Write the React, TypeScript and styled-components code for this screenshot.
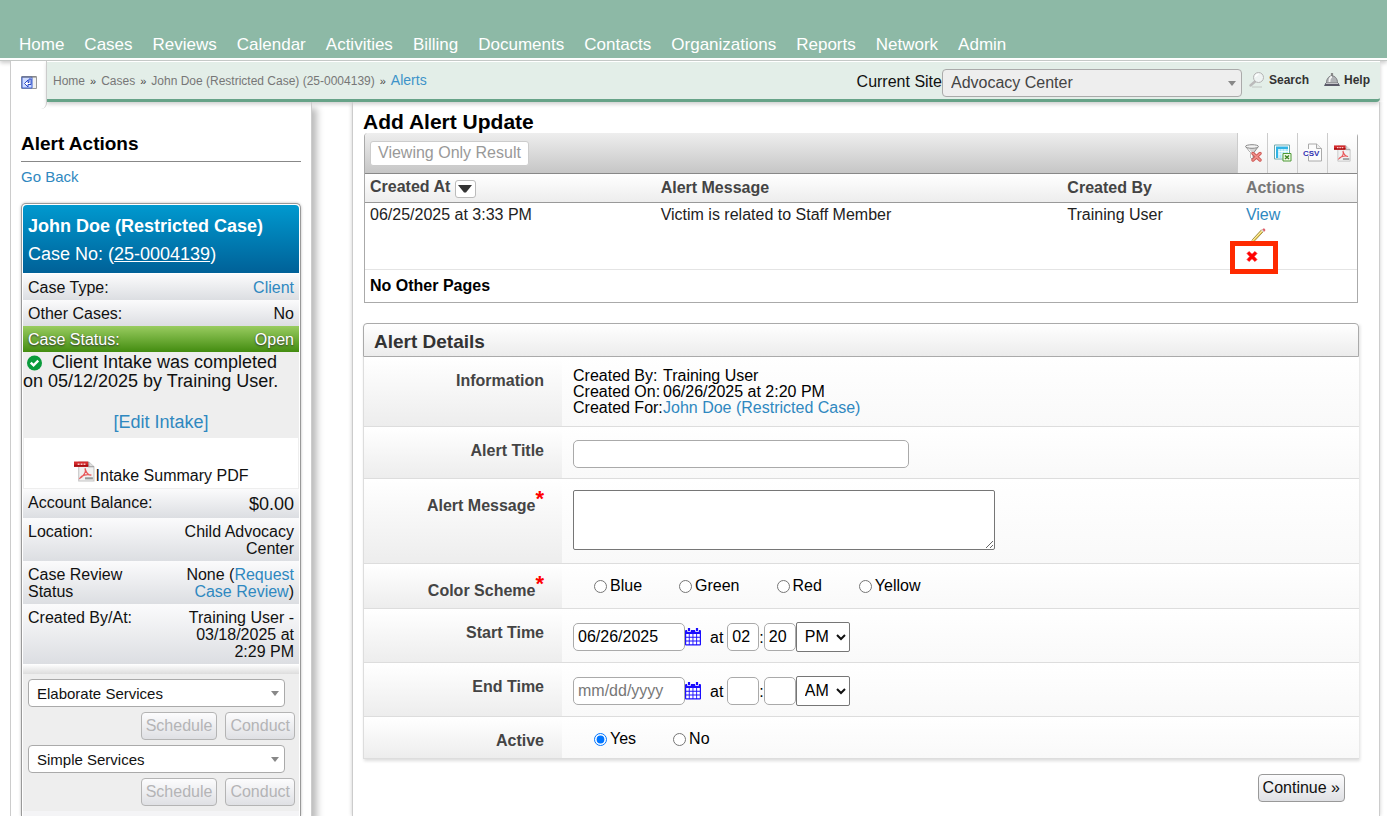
import React from "react";
import styled, { createGlobalStyle } from "styled-components";

const Global = createGlobalStyle`
  *, *::before, *::after { box-sizing: border-box; }
  body {
    margin: 0;
    background: #fff;
    color: #111;
    font: 16px/17px "Liberation Sans", Arial, sans-serif;
  }
  button, input, select, textarea { font: inherit; color: inherit; margin: 0; }
  h1, h2, h3, p, ul, ol, dl, dd { margin: 0; padding: 0; }
  ul, ol { list-style: none; }
  a { color: #2f88c0; text-decoration: none; }
`;

const Page = styled.div`
  min-height: 100vh;
  display: flex;
  flex-direction: column;
`;

const Header = styled.header`
  background: #8db9a6;
  padding: 35px 19px 3px;
  border-bottom: 2px solid #fff;
  box-shadow: 0 1px 0 #c4c8c6, 0 3px 4px #ccc;
`;

const NavList = styled.ul`
  display: flex;
  flex-wrap: wrap;
  gap: 0 20px;
`;

const NavLink = styled.a`
  color: #fff;
  font-size: 17px;
  line-height: 20px;
`;

const Shell = styled.div`
  flex: 1;
  display: flex;
  flex-direction: column;
  margin: 1px 7px 0 10px;
  border-left: 1px solid #ccc;
`;

const TopBar = styled.div`
  display: flex;
  align-items: flex-start;
  position: relative;
  z-index: 1;
`;

const ToggleTab = styled.button`
  width: 36px;
  height: 48px;
  margin-bottom: -8px;
  padding: 0 0 3px;
  border: solid #ccc;
  border-width: 0 1px 0 0;
  border-radius: 0 0 6px 0;
  background: #fff;
`;

const CrumbBar = styled.div`
  flex: 1;
  display: flex;
  align-items: center;
  justify-content: space-between;
  height: 41px;
  padding: 1px 10px 0 6px;
  background: #e3eee8;
  border-top: 1px solid #fff;
  border-bottom: 3px solid #67a388;
  border-radius: 0 0 4px 0;
  box-shadow: 0 2px 4px #ccc;
`;

const Crumbs = styled.ol`
  display: flex;
  align-items: center;
  font-size: 12px;
  li + li::before {
    content: "»";
    color: #444;
    font-size: 11px;
    margin: 0 5px;
  }
`;

const Crumb = styled.a<{ $current?: boolean }>`
  color: ${(p) => (p.$current ? "#3d93c9" : "#777")};
  font-size: ${(p) => (p.$current ? 14 : 12)}px;
`;

const SiteTools = styled.div`
  display: flex;
  align-items: center;
`;

const ToolLink = styled.a`
  display: flex;
  align-items: center;
  gap: 4px;
  margin-left: 7px;
  padding-bottom: 2px;
  color: #333;
  font-size: 12px;
  font-weight: bold;
  & + & { margin-left: 15px; }
`;

const SelectBox = styled.span<{ $site?: boolean }>`
  position: relative;
  display: block;
  width: ${(p) => (p.$site ? 300 : 257)}px;
  margin-top: ${(p) => (p.$site ? 3 : 0)}px;
  font-size: ${(p) => (p.$site ? 16 : 15)}px;
  color: ${(p) => (p.$site ? "#444" : "#111")};
  &::after {
    content: "";
    position: absolute;
    right: 6px;
    top: 50%;
    margin-top: -2px;
    border: solid transparent;
    border-width: 5px 4px 0;
    border-top-color: #888;
    pointer-events: none;
  }
  select {
    display: block;
    width: 100%;
    height: 28px;
    padding: 0 20px 0 8px;
    appearance: none;
    background: ${(p) => (p.$site ? "#eee" : "#fff")};
    border: 1px solid #aaa;
    border-radius: 4px;
  }
`;

const Columns = styled.div`
  flex: 1;
  display: flex;
  gap: 40px;
`;

const Sidebar = styled.aside`
  flex: none;
  width: 301px;
  padding: 32px 10px 0;
  display: flex;
  flex-direction: column;
  border-right: 1px solid #ccc;
  box-shadow: 5px 6px 7px #bbb;
  clip-path: inset(0 -20px 0 0);
`;

const SideTitle = styled.h2`
  font-size: 19px;
  line-height: 19px;
  padding-bottom: 8px;
  border-bottom: 1px solid #888;
  color: #000;
`;

const BackLink = styled.a`
  margin: 6px 0 18px;
  font-size: 15px;
`;

const Card = styled.section`
  flex: 1;
  display: flex;
  flex-direction: column;
  padding: 1px 1px 0;
  border: solid #999;
  border-width: 1px 1px 0;
  border-radius: 5px 5px 0 0;
  background: #fff;
  box-shadow: 0 0 3px #bbb;
`;

const CardHead = styled.div`
  margin-bottom: 1px;
  padding: 10px 5px 8px;
  border-radius: 4px 4px 0 0;
  background: linear-gradient(#0099cf, #006198);
  color: #fff;
  font-size: 18px;
  line-height: 22px;
  h3 { font-size: 18px; padding-bottom: 6px; }
  a { color: #fff; text-decoration: underline; }
`;

const InfoRow = styled.div<{ $green?: boolean; $big?: boolean }>`
  display: flex;
  justify-content: space-between;
  padding: 5px 5px 4px;
  background: ${(p) => (p.$green ? "linear-gradient(#99cc60, #438c10)" : "linear-gradient(#fbfbfc, #dcdee2)")};
  color: ${(p) => (p.$green ? "#fff" : "#111")};
  text-shadow: ${(p) => (p.$green ? "0 1px 2px #333" : "none")};
  dd {
    max-width: 118px;
    text-align: right;
    font-size: ${(p) => (p.$big ? 18 : 16)}px;
    line-height: ${(p) => (p.$big ? 20 : 17)}px;
  }
  dt { max-width: 130px; }
`;

const Intake = styled.div`
  height: 85px;
  padding-top: 1px;
  background: #eee;
  font-size: 18px;
  line-height: 19px;
  svg { margin: 0 5px 0 4px; vertical-align: -3px; }
`;

const EditLink = styled.a`
  display: block;
  padding-top: 22px;
  text-align: center;
`;

const PdfLink = styled.a`
  display: flex;
  align-items: flex-end;
  justify-content: center;
  gap: 1px;
  height: 52px;
  padding-bottom: 4px;
  border: 1px solid #eee;
  color: #111;
  svg { margin-bottom: 2px; }
`;

const Strip = styled.div<{ $fill?: boolean }>`
  flex: ${(p) => (p.$fill ? "1 0 4px" : "none")};
  height: 10px;
  background: ${(p) => (p.$fill ? "#f4f4f6" : "linear-gradient(#fff, #ddd)")};
`;

const Services = styled.div`
  display: flex;
  flex-direction: column;
  gap: 5px;
  padding: 5px 4px 5px 5px;
  background: #eee;
`;

const ButtonRow = styled.div<{ $wide?: boolean }>`
  display: flex;
  justify-content: flex-end;
  gap: 8px;
  padding: ${(p) => (p.$wide ? "15px 14px 14px" : "0")};
`;

const PushButton = styled.button`
  height: 28px;
  padding: 0 4px 2px;
  border: 1px solid #999;
  border-radius: 4px;
  background: linear-gradient(#fcfcfd, #dfe0e4);
  &:disabled { color: #b4b4b6; border-color: #b4b4b4; }
`;

const Main = styled.main`
  flex: 1;
  min-width: 0;
  padding: 9px 20px 0 10px;
  border: solid #ccc;
  border-width: 0 1px;
  box-shadow: 0 0 4px #ccc;
  clip-path: inset(0 -8px 0 -8px);
`;

const Title = styled.h1`
  font-size: 21px;
  line-height: 22px;
  color: #000;
`;

const ListBox = styled.section`
  margin: 0 1px 20px;
  border: 1px solid #aaa;
  border-top: 0;
  border-radius: 4px 4px 0 0;
`;

const ListTools = styled.div`
  display: flex;
  height: 41px;
  border-bottom: 1px solid #888;
  border-radius: 4px 4px 0 0;
  background: linear-gradient(#eee, #c6c6c6);
`;

const ResultButton = styled.button`
  align-self: center;
  margin: 0 auto 0 5px;
  height: 25px;
  padding: 0 7px 2px;
  border: 1px solid #ccc;
  border-radius: 3px;
  background: #fff;
  &:disabled { color: #999; }
`;

const ToolButton = styled.button`
  width: 30px;
  padding: 0;
  border: 0;
  border-left: 1px solid #ccc;
  background: linear-gradient(#fff, #f0f0f0);
  svg { display: block; margin: auto; }
`;

const Table = styled.table`
  width: 100%;
  table-layout: fixed;
  border-collapse: collapse;
  text-align: left;
  th, td { padding: 0 5px; vertical-align: top; }
  th {
    height: 28px;
    vertical-align: middle;
    color: #444;
    background: linear-gradient(#fff, #ededed);
    border-bottom: 1px solid #999;
  }
  th:last-child { color: #777; }
  tbody td { height: 67px; padding-top: 3px; color: #222; border-bottom: 1px solid #e4e4e4; }
  tfoot td { height: 33px; vertical-align: middle; font-weight: bold; color: #000; }
`;

const Col = styled.col<{ $w: string }>`
  width: ${(p) => p.$w};
`;

const SortButton = styled.button`
  width: 21px;
  height: 18px;
  padding: 0;
  border: 1px solid #bbb;
  border-radius: 3px;
  background: #fff;
  vertical-align: -5px;
  svg { display: block; margin: auto; }
`;

const Actions = styled.div`
  display: flex;
  flex-direction: column;
  align-items: flex-start;
  gap: 5px;
  position: relative;
`;

const IconButton = styled.button`
  display: block;
  padding: 0;
  border: 0;
  background: none;
  svg { display: block; }
`;

const Highlight = styled.span`
  position: absolute;
  left: -16px;
  top: 35px;
  width: 48px;
  height: 33px;
  border: 5px solid #ff2a00;
  pointer-events: none;
`;

const Details = styled.form`
  box-shadow: 1px 2px 3px #ddd;
`;

const DetailsTitle = styled.h2`
  height: 34px;
  padding: 7px 10px;
  border: 1px solid #aaa;
  border-radius: 4px 4px 0 0;
  background: linear-gradient(#fff, #ececec);
  color: #333;
  font-size: 19px;
  line-height: 22px;
`;

const Field = styled.div`
  display: flex;
  border: solid #ddd;
  border-width: 0 0 1px 1px;
`;

const Label = styled.div<{ $required?: boolean }>`
  flex: none;
  width: 198px;
  padding: ${(p) => (p.$required ? 17 : 14)}px 18px 9px 0;
  border-top: 1px solid #fff;
  background: linear-gradient(#fff, #ededed);
  color: #444;
  font-weight: bold;
  text-align: right;
`;

const Star = styled.span`
  color: #f00;
  font-size: 22px;
  line-height: 0;
  vertical-align: 5px;
`;

const Value = styled.div`
  flex: 1;
  padding: 11px;
  padding-bottom: 10px;
  background: linear-gradient(#fff, #f9f9f9);
  color: #000;
`;

const Facts = styled.dl`
  display: grid;
  grid-template-columns: 90px 1fr;
  line-height: 16px;
`;

const TextInput = styled.input<{ $w: number }>`
  display: block;
  width: ${(p) => p.$w}px;
  height: 28px;
  padding: 0 4px;
  border: 1px solid #aaa;
  border-radius: 5px;
  background: #fff;
  &::placeholder { color: #777; }
`;

const TitleWrap = styled.div`
  padding: 2px 0 0;
`;

const TextArea = styled.textarea`
  display: block;
  width: 422px;
  height: 60px;
  margin-bottom: 3px;
  border: 1px solid #767676;
  border-radius: 2px;
  background: #fff;
`;

const Radios = styled.div`
  display: flex;
  gap: 37px;
  padding: 2px 0 0 21px;
  line-height: 17px;
  label { display: flex; align-items: center; gap: 3px; }
  input { width: 13px; height: 13px; margin-top: 2px; accent-color: #0075ff; }
`;

const TimeLine = styled.div`
  display: flex;
  align-items: center;
  padding-top: 2px;
`;

const At = styled.span`
  padding: 0 4px 0 9px;
`;

const Meridiem = styled.span`
  position: relative;
  select {
    display: block;
    width: 54px;
    height: 30px;
    padding: 0 0 1px 8px;
    appearance: none;
    border: 1px solid #767676;
    border-radius: 2px;
    background: #fff;
  }
  svg { position: absolute; right: 4px; top: 11px; pointer-events: none; }
`;

const PdfIcon = ({ size = 20 }: { size?: number }) => (
  <svg width={size} height={size} viewBox="0 0 20 20">
    <path d="M4.500 1H14l5 4.500V19H4.500z" fill="#f1f1f1" stroke="#c4c4c4" />
    <path d="M14 1v4.500h5" fill="#ddd" stroke="#999" />
    <path d="M0 .5h13.500V5.500H0z" fill="#d42a2c" />
    <path d="M0 3.500h13.500v2H0z" fill="#a90f12" />
    <path d="M3.500 3h1.800M6.300 3h1.800M9.100 3h1.800" fill="none" stroke="#f7caca" strokeWidth="1.400" />
    <path d="M10.500 7c1.500 4-2 7.500-4.500 9 1-2 6-4 10.500-2.500-2.500 0-5-2.500-6-6.500" fill="none" stroke="#e8585a" strokeWidth="1.300" />
    <path d="M10.500 16.500H18" stroke="#999" strokeWidth="2" />
  </svg>
);

const FilterIcon = () => (
  <svg width="18" height="18" viewBox="0 0 18 18">
    <path d="M2 3 7 9v5l2.500 1V9l4.500-6z" fill="#d4d4d4" stroke="#8c8c8c" />
    <path d="M3.500 3.500 7.500 9v5" fill="none" stroke="#fff" />
    <ellipse cx="8" cy="2.500" rx="6.500" ry="1.800" fill="#f3f3f3" stroke="#888" />
    <path d="m9 9.500 7 6.500M16 9.500 9 16" stroke="#cf5a56" strokeWidth="3.400" strokeLinecap="round" />
    <path d="m9 9.500 7 6.500M16 9.500 9 16" stroke="#f0918c" strokeWidth="1.600" strokeLinecap="round" />
  </svg>
);

const ExcelIcon = () => (
  <svg width="18" height="18" viewBox="0 0 18 18">
    <path d="M.5 1h15v14H.5z" fill="#fff" stroke="#6fa9ad" />
    <path d="M2 2.500h12v2.500H2zM2 5h2.500v9H2z" fill="#2fb4e6" />
    <path d="M4.500 5H14v9H4.500z" fill="#a9e4f8" />
    <path d="M5 5v9M8 5v9M11 5v9M4.500 7.500H14M4.500 10H14" stroke="#fff" strokeWidth=".8" />
    <path d="M9 9.500h8V17H9z" fill="#f2fae9" stroke="#4d9a35" />
    <path d="m11 11.500 4 3.500M15 11.500 11 15" stroke="#3c8527" strokeWidth="1.500" />
  </svg>
);

const CsvIcon = () => (
  <svg width="20" height="20" viewBox="0 0 20 20">
    <path d="M5.500 1h8l5 4.500V18h-13z" fill="#fcfcfc" stroke="#aaa" />
    <path d="M13.500 1v4.500h5" fill="#eee" stroke="#aaa" />
    <path d="M1 6h15v7H1z" fill="#fcfcfc" />
    <text x="0" y="13" fontSize="8" fontWeight="bold" fill="#3030b0" fontFamily="Liberation Sans, Arial, sans-serif">CSV</text>
  </svg>
);

const PencilIcon = () => (
  <svg width="22" height="17" viewBox="-4 0 22 17">
    <path d="m1 15 1.500-3.500L11.500 1.800l1.800 1.800L4 13.500z" fill="#e9c94f" stroke="#8c7c3a" strokeWidth=".8" />
    <path d="m2.500 12.800 9.500-10" stroke="#fff1a8" />
    <path d="m12 2 1.200-1.500q2.600-.5 2 2L14 4z" fill="#e0606c" />
    <path d="m11.200 2.500 1.800 1.800 1-1-1.800-1.800z" fill="#ddd" />
  </svg>
);

const CrossIcon = () => (
  <svg width="12" height="13" viewBox="0 0 12 12">
    <path d="M3 1 6 3.800 9 1l2 2-2.800 3L11 9l-2 2-3-2.800L3 11 1 9l2.800-3L1 3z" fill="#f00" stroke="#f00" strokeWidth=".6" />
  </svg>
);

const CalendarIcon = () => (
  <svg width="16" height="18" viewBox="0 0 16 18">
    <path d="M1 2h14q1 0 1 1v13.500q0 1-1 1H1q-1 0-1-1V3q0-1 1-1z" fill="#1a0dff" />
    <path d="M2.500-.5h3v4h-3zM10.500-.5h3v4h-3z" fill="#1a0dff" stroke="#fff" strokeWidth=".8" />
    <path
      d="M1.200 6h2.600v2.800H1.200zM4.700 6h2.800v2.800H4.700zM8.400 6h2.800v2.800H8.400zM12.100 6h2.700v2.800h-2.700zM1.200 9.700h2.600v2.800H1.200zM4.700 9.700h2.800v2.800H4.700zM8.400 9.700h2.800v2.800H8.400zM12.100 9.700h2.700v2.800h-2.700zM1.200 13.400h2.600v2.800H1.200zM4.700 13.400h2.800v2.800H4.700zM8.400 13.400h2.800v2.800H8.400zM12.100 13.400h2.700v2.800h-2.700z"
      fill="#fff"
    />
  </svg>
);

const CheckIcon = () => (
  <svg width="15" height="16" viewBox="0 0 16 16">
    <circle cx="8" cy="8" r="8" fill="#0a9b3c" />
    <path d="m4 7.500 3 3 5-5" fill="none" stroke="#fff" strokeWidth="2.600" />
  </svg>
);

const CollapseIcon = () => (
  <svg width="16" height="13" viewBox="0 0 16 13">
    <path d="M.5.500h15v12H.5z" fill="#f1f1f1" stroke="#999" />
    <path d="M1 1h10v11H1z" fill="#cfdcff" stroke="#3a5fd0" />
    <path d="M1 1h14" stroke="#777" />
    <path d="M10 3v5.500H7V11L3.500 7.500 7 4v2.500h1V3z" fill="#fff" stroke="#2746c8" />
  </svg>
);

const SearchIcon = () => (
  <svg width="16" height="16" viewBox="0 0 16 16">
    <path d="M3 15h10" stroke="#ccd3cf" strokeWidth="1.500" />
    <path d="m6 9.500-4.500 4" stroke="#bbb" strokeWidth="2.400" strokeLinecap="round" />
    <circle cx="9.500" cy="5.500" r="5" fill="#eef3f2" stroke="#b4b4b4" />
    <path d="M6.500 5a3 3 0 0 1 3-2.500" fill="none" stroke="#fff" strokeWidth="1.300" />
  </svg>
);

const BellIcon = () => (
  <svg width="16" height="14" viewBox="0 0 16 14">
    <path d="M8 0v3" stroke="#888" strokeWidth="2.200" />
    <path d="M2.500 10c0-9.500 11-9.500 11 0z" fill="#b0b3b6" stroke="#7c7c80" />
    <path d="M5.500 9c0-4 1.500-5 2.500-5" fill="none" stroke="#f2f2f2" strokeWidth="1.800" />
    <path d="M1.500 10h13l1.500 3H0z" fill="#5a5a68" />
    <path d="M2 10.500h12" stroke="#c4c4c8" />
  </svg>
);

const navItems = ["Home", "Cases", "Reviews", "Calendar", "Activities", "Billing", "Documents", "Contacts", "Organizations", "Reports", "Network", "Admin"];

const services = ["Elaborate Services", "Simple Services"];

const RadioSet = ({ name, options, checked }: { name: string; options: string[]; checked?: string }) => (
  <Radios role="radiogroup" aria-label={name}>
    {options.map((o) => (
      <label key={o}>
        <input type="radio" name={name} defaultChecked={o === checked} />
        {o}
      </label>
    ))}
  </Radios>
);

const DateTime = ({ id, date, hour, minute, half }: { id: string; date?: string; hour?: string; minute?: string; half: string }) => (
  <TimeLine>
    <TextInput id={id} $w={112} defaultValue={date} placeholder="mm/dd/yyyy" />
    <IconButton type="button" aria-label="Choose date"><CalendarIcon /></IconButton>
    <At>at</At>
    <TextInput $w={32} defaultValue={hour} aria-label="Hour" />:
    <TextInput $w={32} defaultValue={minute} aria-label="Minute" />
    <Meridiem>
      <select defaultValue={half} aria-label="AM or PM">
        <option>AM</option>
        <option>PM</option>
      </select>
      <svg width="10" height="8" viewBox="0 0 10 8"><path d="m1 2 4 4 4-4" fill="none" stroke="#111" strokeWidth="2" /></svg>
    </Meridiem>
  </TimeLine>
);

export default function App() {
  return (
    <Page>
      <Global />
      <Header>
        <nav>
          <NavList>
            {navItems.map((n) => (
              <li key={n}><NavLink href="#">{n}</NavLink></li>
            ))}
          </NavList>
        </nav>
      </Header>
      <Shell>
        <TopBar>
          <ToggleTab aria-label="Collapse sidebar"><CollapseIcon /></ToggleTab>
          <CrumbBar>
            <Crumbs>
              <li><Crumb href="#">Home</Crumb></li>
              <li><Crumb href="#">Cases</Crumb></li>
              <li><Crumb href="#">John Doe (Restricted Case) (25-0004139)</Crumb></li>
              <li><Crumb href="#" $current>Alerts</Crumb></li>
            </Crumbs>
            <SiteTools>
              <label htmlFor="site">Current Site</label>
              <SelectBox $site>
                <select id="site"><option>Advocacy Center</option></select>
              </SelectBox>
              <ToolLink href="#"><SearchIcon />Search</ToolLink>
              <ToolLink href="#"><BellIcon />Help</ToolLink>
            </SiteTools>
          </CrumbBar>
        </TopBar>
        <Columns>
          <Sidebar>
            <SideTitle>Alert Actions</SideTitle>
            <BackLink href="#">Go Back</BackLink>
            <Card>
              <CardHead>
                <h3>John Doe (Restricted Case)</h3>
                <p>Case No: (<a href="#">25-0004139</a>)</p>
              </CardHead>
              <dl>
                <InfoRow><dt>Case Type:</dt><dd><a href="#">Client</a></dd></InfoRow>
                <InfoRow><dt>Other Cases:</dt><dd>No</dd></InfoRow>
                <InfoRow $green><dt>Case Status:</dt><dd>Open</dd></InfoRow>
              </dl>
              <Intake>
                <p><CheckIcon /> Client Intake was completed on 05/12/2025 by Training User.</p>
                <EditLink href="#">[Edit Intake]</EditLink>
              </Intake>
              <PdfLink href="#"><PdfIcon size={21} />Intake Summary PDF</PdfLink>
              <dl>
                <InfoRow $big><dt>Account Balance:</dt><dd>$0.00</dd></InfoRow>
                <InfoRow><dt>Location:</dt><dd>Child Advocacy Center</dd></InfoRow>
                <InfoRow><dt>Case Review Status</dt><dd>None (<a href="#">Request Case Review</a>)</dd></InfoRow>
                <InfoRow><dt>Created By/At:</dt><dd>Training User - 03/18/2025 at 2:29 PM</dd></InfoRow>
              </dl>
              <Strip />
              <Services>
                {services.map((s) => (
                  <React.Fragment key={s}>
                    <SelectBox>
                      <select aria-label={s}><option>{s}</option></select>
                    </SelectBox>
                    <ButtonRow>
                      <PushButton disabled>Schedule</PushButton>
                      <PushButton disabled>Conduct</PushButton>
                    </ButtonRow>
                  </React.Fragment>
                ))}
              </Services>
              <Strip $fill />
            </Card>
          </Sidebar>
          <Main>
            <Title>Add Alert Update</Title>
            <ListBox>
              <ListTools>
                <ResultButton disabled>Viewing Only Result</ResultButton>
                <ToolButton aria-label="Clear filter"><FilterIcon /></ToolButton>
                <ToolButton aria-label="Export to Excel"><ExcelIcon /></ToolButton>
                <ToolButton aria-label="Export to CSV"><CsvIcon /></ToolButton>
                <ToolButton aria-label="Export to PDF"><PdfIcon size={17} /></ToolButton>
              </ListTools>
              <Table>
                <colgroup>
                  <Col $w="29.3%" />
                  <Col $w="41%" />
                  <Col $w="18%" />
                  <Col $w="auto" />
                </colgroup>
                <thead>
                  <tr>
                    <th>
                      Created At{" "}
                      <SortButton aria-label="Sort by created at">
                        <svg width="14" height="8" viewBox="0 0 14 8"><path d="M0 0h14L8 7.500H6z" fill="#333" /></svg>
                      </SortButton>
                    </th>
                    <th>Alert Message</th>
                    <th>Created By</th>
                    <th>Actions</th>
                  </tr>
                </thead>
                <tbody>
                  <tr>
                    <td>06/25/2025 at 3:33 PM</td>
                    <td>Victim is related to Staff Member</td>
                    <td>Training User</td>
                    <td>
                      <Actions>
                        <a href="#">View</a>
                        <IconButton aria-label="Edit alert"><PencilIcon /></IconButton>
                        <Highlight />
                        <IconButton aria-label="Delete alert"><CrossIcon /></IconButton>
                      </Actions>
                    </td>
                  </tr>
                </tbody>
                <tfoot>
                  <tr><td colSpan={4}>No Other Pages</td></tr>
                </tfoot>
              </Table>
            </ListBox>
            <Details onSubmit={(e) => e.preventDefault()} id="alert">
              <DetailsTitle>Alert Details</DetailsTitle>
              <Field>
                <Label>Information</Label>
                <Value>
                  <Facts>
                    <dt>Created By:</dt><dd>Training User</dd>
                    <dt>Created On:</dt><dd>06/26/2025 at 2:20 PM</dd>
                    <dt>Created For:</dt><dd><a href="#">John Doe (Restricted Case)</a></dd>
                  </Facts>
                </Value>
              </Field>
              <Field>
                <Label><label htmlFor="title">Alert Title</label></Label>
                <Value><TitleWrap><TextInput id="title" $w={336} /></TitleWrap></Value>
              </Field>
              <Field>
                <Label $required><label htmlFor="message">Alert Message</label><Star>*</Star></Label>
                <Value><TextArea id="message" /></Value>
              </Field>
              <Field>
                <Label $required>Color Scheme<Star>*</Star></Label>
                <Value><RadioSet name="Color Scheme" options={["Blue", "Green", "Red", "Yellow"]} /></Value>
              </Field>
              <Field>
                <Label><label htmlFor="start">Start Time</label></Label>
                <Value><DateTime id="start" date="06/26/2025" hour="02" minute="20" half="PM" /></Value>
              </Field>
              <Field>
                <Label><label htmlFor="end">End Time</label></Label>
                <Value><DateTime id="end" half="AM" /></Value>
              </Field>
              <Field>
                <Label>Active</Label>
                <Value><RadioSet name="Active" options={["Yes", "No"]} checked="Yes" /></Value>
              </Field>
            </Details>
            <ButtonRow $wide>
              <PushButton type="submit" form="alert">Continue »</PushButton>
            </ButtonRow>
          </Main>
        </Columns>
      </Shell>
    </Page>
  );
}
